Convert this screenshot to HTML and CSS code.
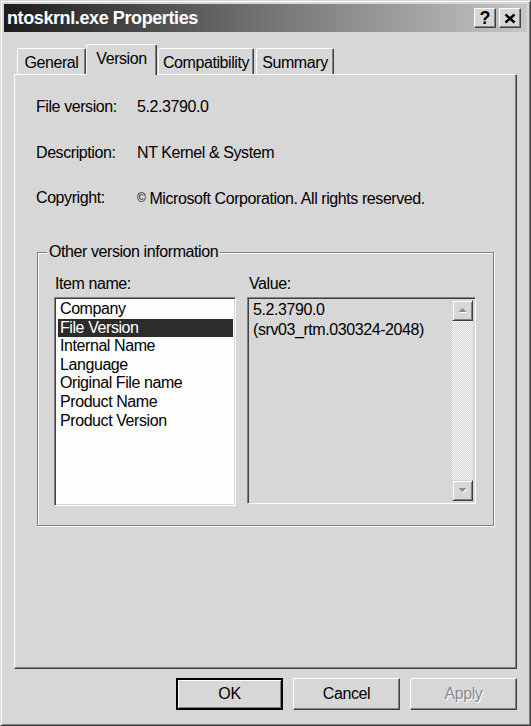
FILE: index.html
```html
<!DOCTYPE html>
<html>
<head>
<meta charset="utf-8">
<title>ntoskrnl.exe Properties</title>
<link rel="stylesheet" href="styles.css">
</head>
<body>
<div class="window">
  <div class="titlebar">
    <span class="title">ntoskrnl.exe Properties</span>
    <div class="caption-buttons">
      <button class="cap-btn cap-help">?</button>
      <button class="cap-btn cap-close">
        <svg width="12" height="11" viewBox="0 0 12 11"><path d="M1.5 1.5L10.5 9.5M10.5 1.5L1.5 9.5" stroke="#000" stroke-width="2.4" fill="none"/></svg>
      </button>
    </div>
  </div>
  <div class="body">
    <div class="tabs">
      <div class="tab tab-general">General</div>
      <div class="tab tab-active tab-version">Version</div>
      <div class="tab tab-compat">Compatibility</div>
      <div class="tab tab-summary">Summary</div>
    </div>
    <div class="panel">
      <div class="info">
        <span class="info-label">File version:</span><span class="info-value">5.2.3790.0</span>
        <span class="info-label">Description:</span><span class="info-value">NT Kernel &amp; System</span>
        <span class="info-label">Copyright:</span><span class="info-value"><span class="copy">©</span> Microsoft Corporation. All rights reserved.</span>
      </div>
      <div class="group">
        <div class="group-title">Other version information</div>
        <div class="cols">
          <div class="col col-items">
            <div class="col-label">Item name:</div>
            <div class="listbox">
              <div class="item">Company</div>
              <div class="item item-selected">File Version</div>
              <div class="item">Internal Name</div>
              <div class="item">Language</div>
              <div class="item">Original File name</div>
              <div class="item">Product Name</div>
              <div class="item">Product Version</div>
            </div>
          </div>
          <div class="col col-value">
            <div class="col-label col-label-value">Value:</div>
            <div class="valuebox">
              <div class="value-text">5.2.3790.0<br>(srv03_rtm.030324-2048)</div>
              <div class="scrollbar">
                <div class="sb-btn">
                  <svg width="9" height="6" viewBox="0 0 9 6"><path d="M5.5 1L9.5 5H1.5Z" fill="#fff"/><path d="M4.5 0L8.5 4H0.5Z" fill="#8a8a8a"/></svg>
                </div>
                <div class="sb-track"></div>
                <div class="sb-btn">
                  <svg width="9" height="6" viewBox="0 0 9 6"><path d="M1.5 1H9.5L5.5 5Z" fill="#fff"/><path d="M0.5 0H8.5L4.5 4Z" fill="#8a8a8a"/></svg>
                </div>
              </div>
            </div>
          </div>
        </div>
      </div>
    </div>
    <div class="buttons">
      <button class="btn btn-default">OK</button>
      <button class="btn">Cancel</button>
      <button class="btn btn-disabled">Apply</button>
    </div>
  </div>
</div>
</body>
</html>
```

FILE: styles.css
```css
html, body {
  margin: 0;
  padding: 0;
}

body {
  width: 531px;
  height: 726px;
  overflow: hidden;
  background: #d7d7d7;
  font-family: "Liberation Sans", Arial, sans-serif;
  font-size: 16px;
  letter-spacing: -0.42px;
  color: #000;
}

.window {
  box-sizing: border-box;
  width: 531px;
  height: 726px;
  border: 1px solid;
  border-color: #d7d7d7 #404040 #404040 #d7d7d7;
  box-shadow: inset 1px 1px #fff, inset -1px -1px #808080;
  padding: 3px;
  background: #d7d7d7;
}

.titlebar {
  height: 28px;
  background: linear-gradient(to right, #1c1c1c 0%, #5a5a5a 35%, #c6c6c6 100%);
  display: flex;
  align-items: center;
  justify-content: space-between;
  padding: 0 6px 0 3px;
}

.title {
  color: #fff;
  font-weight: bold;
  font-size: 18px;
  letter-spacing: -0.4px;
  line-height: 28px;
  white-space: nowrap;
}

.caption-buttons {
  display: flex;
  gap: 3px;
}

.cap-btn {
  box-sizing: border-box;
  width: 22px;
  height: 20px;
  padding: 0;
  margin: 0;
  border: 1px solid;
  border-color: #fff #404040 #404040 #fff;
  box-shadow: inset -1px -1px #808080;
  background: #d7d7d7;
  display: flex;
  align-items: center;
  justify-content: center;
  font-family: "Liberation Sans", Arial, sans-serif;
  font-weight: bold;
  font-size: 18px;
  line-height: 1;
  color: #000;
}

.body {
  padding: 12px 10px 0;
}

.tabs {
  position: relative;
  z-index: 1;
  display: flex;
  align-items: flex-end;
  height: 30px;
  padding-left: 3px;
}

.tab {
  box-sizing: border-box;
  height: 26px;
  padding-top: 5px;
  line-height: 18px;
  text-align: center;
  white-space: nowrap;
  border-top: 1px solid #fff;
  border-left: 1px solid #fff;
  border-right: 1px solid #404040;
  box-shadow: inset -1px 0 #808080;
  border-radius: 2px 2px 0 0;
  background: #d7d7d7;
}

.tab-general { width: 69px; }
.tab-version { width: 71px; }
.tab-compat { width: 96px; margin-left: 1px; }
.tab-summary { width: 78px; margin-left: 2px; }

.tab-active {
  height: 31px;
  margin-bottom: -1px;
}

.panel {
  box-sizing: border-box;
  height: 595px;
  border: 1px solid;
  border-color: #fff #404040 #404040 #fff;
  box-shadow: inset -1px -1px #808080;
  padding: 22px 21px 0;
}

.info {
  display: grid;
  grid-template-columns: 101px auto;
  row-gap: 25.5px;
  line-height: 20px;
  white-space: nowrap;
}

.copy {
  font-size: 12px;
  vertical-align: 2px;
}

.group {
  margin: 43px 1px 0;
  border: 1px solid #808080;
  box-shadow: inset 1px 1px #fff, 1px 1px #fff;
  padding: 0 17px 19px 16px;
}

.group-title {
  width: fit-content;
  margin: -10px 0 0 -7px;
  padding: 0 2px;
  line-height: 18px;
  background: #d7d7d7;
  white-space: nowrap;
}

.cols {
  display: flex;
  gap: 11px;
  margin-top: 14px;
}

.col-items {
  width: 182px;
  flex: none;
}

.col-value {
  flex: 1;
  min-width: 0;
}

.col-label {
  line-height: 18px;
  margin-bottom: 4px;
  padding-left: 1px;
}

.col-label-value {
  padding-left: 2px;
}

.listbox {
  box-sizing: border-box;
  height: 209px;
  border: 1px solid;
  border-color: #808080 #fff #fff #808080;
  box-shadow: inset 1px 1px #404040, inset -1px -1px #d7d7d7;
  background: #fdfdfd;
  padding: 2px 2px 0 3px;
}

.item {
  padding-left: 2px;
  line-height: 18.6px;
  white-space: nowrap;
}

.item-selected {
  background: #2c2c2c;
  color: #fff;
}

.valuebox {
  box-sizing: border-box;
  height: 207px;
  margin-top: 1px;
  border: 1px solid;
  border-color: #808080 #fff #fff #808080;
  box-shadow: inset 1px 1px #404040, inset -1px -1px #d7d7d7;
  padding: 2px;
  display: flex;
  background: #d7d7d7;
}

.value-text {
  flex: 1;
  padding-left: 3px;
  line-height: 20px;
  white-space: nowrap;
}

.scrollbar {
  width: 21px;
  display: flex;
  flex-direction: column;
  flex: none;
}

.sb-btn {
  box-sizing: border-box;
  height: 21px;
  flex: none;
  border: 1px solid;
  border-color: #d7d7d7 #404040 #404040 #d7d7d7;
  box-shadow: inset 1px 1px #fff, inset -1px -1px #808080;
  background: #d7d7d7;
  display: flex;
  align-items: center;
  justify-content: center;
}

.sb-track {
  flex: 1;
  background: repeating-conic-gradient(#f4f4f4 0 25%, #d7d7d7 0 50%) 0 0 / 2px 2px;
}

.buttons {
  display: flex;
  justify-content: flex-end;
  gap: 10px;
  margin-top: 9px;
}

.btn {
  box-sizing: border-box;
  width: 107px;
  height: 32px;
  margin: 0;
  padding: 0;
  border: 1px solid;
  border-color: #fff #404040 #404040 #fff;
  box-shadow: inset -1px -1px #808080;
  background: #d7d7d7;
  font-family: "Liberation Sans", Arial, sans-serif;
  font-size: 16px;
  letter-spacing: -0.42px;
  color: #000;
}

.btn-default {
  border: 2px solid #000;
  box-shadow: inset 1px 1px #fff, inset -1px -1px #808080;
}

.btn-disabled {
  color: #8a8a8a;
  text-shadow: 1px 1px #fff;
}
```
